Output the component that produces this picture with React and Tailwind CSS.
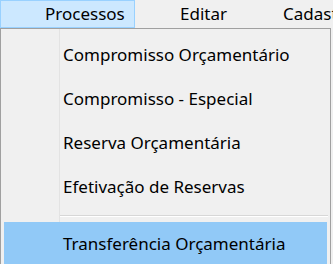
export default function App() {
  const font = { fontFamily: '"Noto Sans", "Open Sans", sans-serif' };
  const items = [
    "Compromisso Orçamentário",
    "Compromisso - Especial",
    "Reserva Orçamentária",
    "Efetivação de Reservas",
  ];
  return (
    <div className="w-[333px] h-[264px] overflow-hidden bg-[#f0f0f0] text-black" style={font}>
      <div className="h-[28px] flex items-stretch bg-[#f0f0f0] text-[17px] whitespace-nowrap overflow-hidden">
        <div className="w-[135px] shrink-0 bg-[#cce8ff] border border-[#99d1ff] flex items-center pl-[44px]">Processos</div>
        <div className="pl-[45px] shrink-0 flex items-center">Editar</div>
        <div className="pl-[56px] flex items-center min-w-0 overflow-hidden">Cadast</div>
      </div>
      <div className="w-[331px] h-[240px] border border-[#a0a0a0] bg-[#f0f0f0] pt-[4px] text-[17px] whitespace-nowrap relative">
        <div className="absolute left-[58px] top-0 bottom-0 w-px bg-[#e3e3e3]" />
        {items.map((t) => (
          <div key={t} className="h-[44px] flex items-center pl-[62px] relative">{t}</div>
        ))}
        <div className="h-[13px] flex items-center pl-[59px] pr-[2px] relative">
          <div className="w-full h-[2px] border-t border-[#d7d7d7] border-b border-b-white" />
        </div>
        <div className="h-[44px] mx-[3px] bg-[#91c9f7] flex items-center pl-[59px] relative">Transferência Orçamentária</div>
      </div>
    </div>
  );
}
